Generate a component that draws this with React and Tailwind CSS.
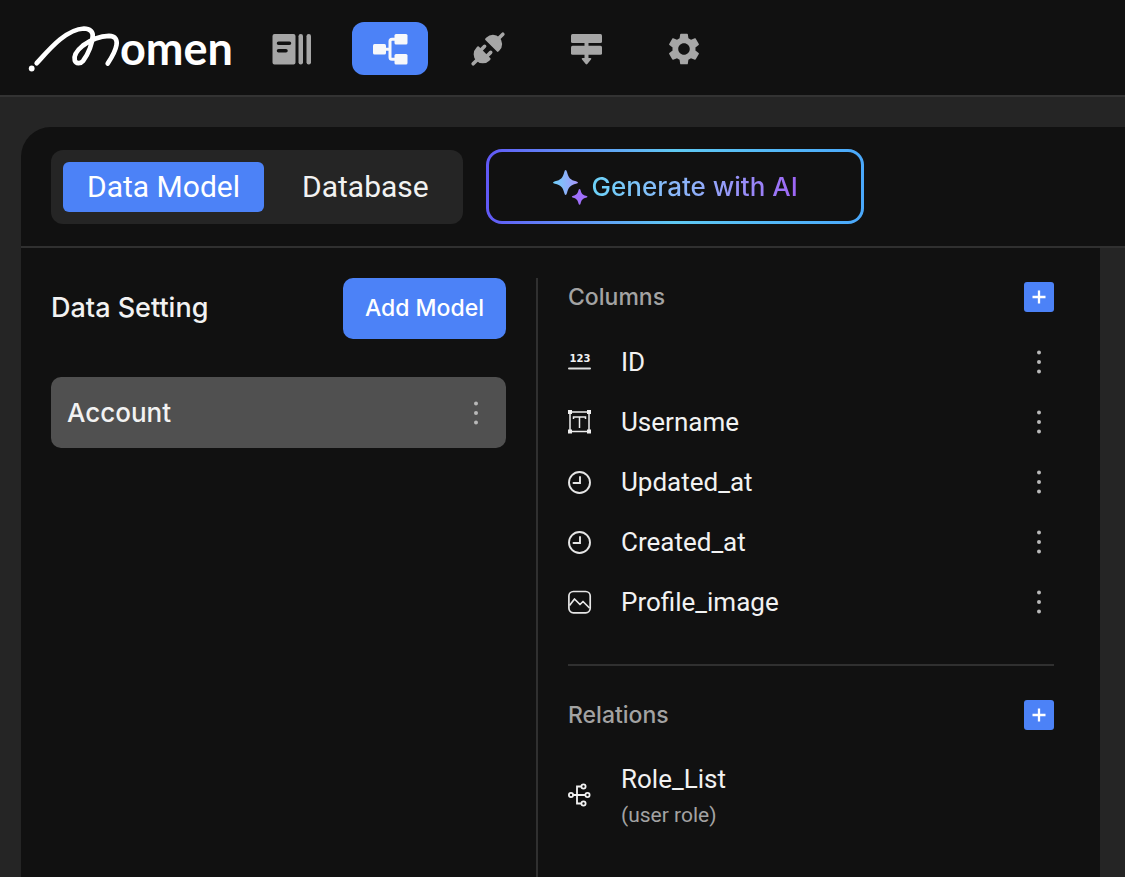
import React from "react";

function Logo() {
  return (
    <svg viewBox="0 -8 208 68" className="h-[68px] w-[208px]" role="img" aria-label="Momen">
      <circle cx="3.700" cy="45.500" r="2.900" fill="#fff" />
      <path
        d="M8.700 40.200C20 28 37 6.500 56 5.500C62 5.500 65 9 64.700 13C64.500 20 60.500 31 55 38C52.500 41 48 41 46.800 37.500C45.500 32.500 50 26.500 55 22.500C63 16.500 73 13 81 12.800C87.500 12.800 89.300 17 88.500 22C87.500 28 84 34 79.700 40.500"
        fill="none"
        stroke="#fff"
        strokeWidth="4.700"
        strokeLinecap="round"
        strokeLinejoin="round"
      />
      <text x="92" y="42" fill="#fff" fontSize="45" fontWeight="700" fontFamily="Lato, sans-serif">
        omen
      </text>
    </svg>
  );
}

function PagesIcon() {
  return (
    <svg viewBox="0 0 40 32" className="h-8 w-10" fill="#a6a6a6">
      <path
        fillRule="evenodd"
        d="M2.500 1H21.500Q23.500 1 23.500 3V29.500Q23.500 31.500 21.500 31.500H2.500Q.500 31.500 .500 29.500V3Q.500 1 2.500 1ZM6.500 8.500A1.700 1.700 0 0 0 6.500 12H17.500A1.700 1.700 0 0 0 17.500 8.500ZM6.500 16A1.700 1.700 0 0 0 6.500 19.500H14A1.700 1.700 0 0 0 14 16Z"
      />
      <rect x="26.500" y="1" width="4.500" height="30.500" rx="2.200" />
      <rect x="34.500" y="1" width="4.500" height="30.500" rx="2.200" />
    </svg>
  );
}

function DataIcon() {
  return (
    <svg viewBox="0 0 36 32" className="h-8 w-9" fill="#f7f8fa">
      <rect x="1" y="11" width="13" height="10.500" rx="1.500" />
      <rect x="22.500" y="1" width="13" height="10.500" rx="1.500" />
      <rect x="22.500" y="21" width="13" height="10.500" rx="1.500" />
      <path d="M13 16.300H18M24 6.300H20Q18 6.300 18 8.300V24.300Q18 26.300 20 26.300H24" fill="none" stroke="#f7f8fa" strokeWidth="3" />
    </svg>
  );
}

function PlugIcon() {
  return (
    <svg viewBox="0 0 36 36" className="h-9 w-9 overflow-visible" fill="#a6a6a6">
      <g transform="rotate(45 18 18)">
        <path d="M8.800 12.500V11A9.200 9.200 0 0 1 27.200 11V12.500Q27.200 13.500 26.200 13.500H9.800Q8.800 13.500 8.800 12.500Z" />
        <path d="M8.800 23.800Q8.800 22.800 9.800 22.800H26.200Q27.200 22.800 27.200 23.800V25.300A9.200 9.200 0 0 1 8.800 25.300Z" />
        <path d="M18 6V-3M18 31V39M13.700 24V18.500M22.300 24V18.500" fill="none" stroke="#a6a6a6" strokeWidth="3.600" strokeLinecap="round" />
      </g>
    </svg>
  );
}

function FlowIcon() {
  return (
    <svg viewBox="0 0 32 32" className="h-8 w-8" fill="#a6a6a6">
      <rect x="1" y="1" width="31" height="9" rx="1.500" />
      <rect x="1" y="12.700" width="31" height="9" rx="1.500" />
      <path d="M14.500 9H18.500V15H14.500ZM14.500 21H18.500V25H20.500Q22 25 21 26.500L17.300 31Q16.500 31.900 15.700 31L12 26.500Q11 25 12.500 25H14.500Z" />
    </svg>
  );
}

function GearIcon() {
  return (
    <svg viewBox="2 2 20 20" className="h-8 w-8" fill="#a6a6a6">
      <path d="M19.140 12.940c.04-.3.06-.61.06-.94 0-.32-.02-.64-.07-.94l2.030-1.580c.18-.14.23-.41.12-.61l-1.920-3.320c-.12-.22-.37-.29-.59-.22l-2.390.96c-.5-.38-1.030-.7-1.620-.94l-.36-2.540c-.04-.24-.24-.41-.48-.41h-3.840c-.24 0-.43.17-.47.41l-.36 2.540c-.59.24-1.130.57-1.620.94l-2.390-.96c-.22-.08-.47 0-.59.22L2.740 8.870c-.12.21-.08.47.12.61l2.030 1.580c-.05.3-.09.63-.09.94s.02.64.07.94l-2.030 1.580c-.18.14-.23.41-.12.61l1.920 3.320c.12.22.37.29.59.22l2.390-.96c.5.38 1.030.7 1.620.94l.36 2.540c.05.24.24.41.48.41h3.840c.24 0 .44-.17.47-.41l.36-2.540c.59-.24 1.130-.56 1.620-.94l2.390.96c.22.08.47 0 .59-.22l1.920-3.320c.12-.22.07-.47-.12-.61l-2.010-1.580zM12 15.600c-1.980 0-3.600-1.620-3.600-3.600s1.620-3.600 3.600-3.600 3.600 1.620 3.600 3.600-1.620 3.600-3.600 3.600z" />
    </svg>
  );
}

function SparkleIcon() {
  return (
    <svg viewBox="0 0 36 36" className="h-9 w-9 shrink-0">
      <defs>
        <linearGradient id="spark" x1="0" y1="0" x2="1" y2="0">
          <stop offset="0" stopColor="#6fd0fa" />
          <stop offset="1" stopColor="#a796fb" />
        </linearGradient>
      </defs>
      <path fill="url(#spark)" d="M13.500 1Q14.500 1 15 3C16.500 9 18.500 11 24 12.300Q26 13 26 13.500Q26 14.200 24 14.700C18.500 16 16.500 18 15 24Q14.500 26 13.500 26Q12.800 26 12.300 24C10.800 18 8.800 16 3 14.700Q1 14.200 1 13.500Q1 13 3 12.300C8.800 11 10.800 9 12.300 3Q12.800 1 13.500 1Z" />
      <path fill="#a070fa" d="M27.500 20Q28.300 20 28.600 21.200C29.500 24.500 30.500 25.800 34 26.800Q35.500 27.200 35.500 27.800Q35.500 28.400 34 28.800C30.500 29.700 29.500 31 28.600 34.500Q28.300 35.800 27.500 35.800Q26.900 35.800 26.500 34.500C25.600 31 24.500 29.700 21.200 28.800Q19.800 28.400 19.800 27.800Q19.800 27.200 21.200 26.800C24.500 25.800 25.600 24.500 26.500 21.200Q26.900 20 27.500 20Z" />
    </svg>
  );
}

function NumberIcon() {
  return (
    <svg viewBox="0 0 24 24" className="h-6 w-6">
      <text x="12" y="12" textAnchor="middle" fill="#f2f2f2" fontSize="10" fontWeight="700" fontFamily="DejaVu Sans, sans-serif">
        123
      </text>
      <path d="M1 18.500H22" stroke="#e0e0e0" strokeWidth="2" strokeLinecap="round" />
    </svg>
  );
}

function TextIcon() {
  return (
    <svg viewBox="0 0 24 24" className="h-6 w-6" fill="none" stroke="#ededed">
      <path d="M2 2H21V21.500H2Z" strokeWidth="1.500" />
      <path d="M5.500 9V7H17.500V9M11.500 7V18" strokeWidth="1.500" />
      <path d="M0 0H4V4H0ZM19 0H23V4H19ZM0 19.500H4V23.500H0ZM19 19.500H23V23.500H19Z" fill="#ededed" stroke="none" />
    </svg>
  );
}

function ClockIcon() {
  return (
    <svg viewBox="0 0 24 24" className="h-6 w-6" fill="none" stroke="#e6e6e6" strokeWidth="1.900" strokeLinecap="round">
      <circle cx="11.500" cy="12.500" r="10.500" />
      <path d="M12 7V13H5.500" />
    </svg>
  );
}

function ImageIcon() {
  return (
    <svg viewBox="0 0 24 24" className="h-6 w-6" fill="none" stroke="#e6e6e6" strokeWidth="1.700" strokeLinejoin="round">
      <rect x=".900" y="1.500" width="21.300" height="21.300" rx="4.500" />
      <path d="M1.500 15.500L6.500 9L12 14.500L15 11.500L21.500 18" />
    </svg>
  );
}

function RelationIcon() {
  return (
    <svg viewBox="0 0 24 24" className="mb-1 h-6 w-6" fill="none" stroke="#f2f2f2" strokeWidth="1.800">
      <circle cx="3" cy="12" r="2.100" />
      <circle cx="19.500" cy="12" r="2.100" />
      <circle cx="15.500" cy="3.500" r="2.100" />
      <circle cx="15.500" cy="20.500" r="2.100" />
      <path d="M5.100 12H17.400M13.400 3.500H9V20.500H13.400" />
    </svg>
  );
}

function Dots() {
  return (
    <svg viewBox="0 0 6 26" className="h-[26px] w-[6px]" fill="#b8b8b8">
      <circle cx="3" cy="3.500" r="2" />
      <circle cx="3" cy="13" r="2" />
      <circle cx="3" cy="22.500" r="2" />
    </svg>
  );
}

function NavButton({ label, active, children }) {
  return (
    <button
      type="button"
      aria-label={label}
      className={
        "flex h-[53px] w-[76px] items-center justify-center rounded-xl " + (active ? "bg-[#4c82f7]" : "")
      }
    >
      {children}
    </button>
  );
}

function SectionHeading({ title }) {
  return (
    <div className="flex h-[30px] items-center justify-between">
      <h2 className="font-['Inter',sans-serif] text-[23px] font-medium text-[#a3a3a3]">{title}</h2>
      <button
        type="button"
        aria-label={"Add to " + title}
        className="flex h-[30px] w-[30px] items-center justify-center rounded-[3px] bg-[#4c82f7]"
      >
        <svg viewBox="0 0 14 14" className="h-[14px] w-[14px]" stroke="#fff" strokeWidth="2.300">
          <path d="M7 .500V13.500M.500 7H13.500" />
        </svg>
      </button>
    </div>
  );
}

const columns = [
  { name: "ID", Icon: NumberIcon },
  { name: "Username", Icon: TextIcon },
  { name: "Updated_at", Icon: ClockIcon },
  { name: "Created_at", Icon: ClockIcon },
  { name: "Profile_image", Icon: ImageIcon },
];

export default function App() {
  return (
    <div className="flex min-h-screen flex-col bg-[#252525] font-['Roboto',sans-serif] text-[#f2f2f2]">
      <header className="flex h-[97px] items-center gap-[18px] border-b-2 border-[#333] bg-[#111] pt-[2px] pl-7">
        <Logo />
        <nav className="flex gap-[22px]">
          <NavButton label="Pages"><PagesIcon /></NavButton>
          <NavButton label="Data" active><DataIcon /></NavButton>
          <NavButton label="Integrations"><PlugIcon /></NavButton>
          <NavButton label="Actionflows"><FlowIcon /></NavButton>
          <NavButton label="Settings"><GearIcon /></NavButton>
        </nav>
      </header>

      <main className="mt-[30px] ml-[21px] flex grow flex-col overflow-hidden rounded-tl-[30px]">
        <div className="flex h-[121px] items-center gap-[23px] border-b-2 border-[#303030] bg-[#111] px-[30px]">
          <div className="flex gap-4 rounded-xl bg-[#252525] p-3">
            <button type="button" className="h-[50px] rounded-md bg-[#4c82f7] px-6 text-[30px] text-white">
              Data Model
            </button>
            <button type="button" className="h-[50px] px-[22px] text-[30px]">
              Database
            </button>
          </div>
          <button
            type="button"
            className="flex h-[75px] w-[378px] rounded-[16px] bg-linear-to-r from-[#6158f6] via-[#5fc9f2] to-[#4aa8fb] p-[3px]"
          >
            <span className="flex h-full w-full items-center justify-center gap-1 rounded-[13px] bg-[#111]">
              <SparkleIcon />
              <span className="bg-linear-to-r from-[#6bd2f8] via-[#8fb0fa] to-[#9d63f5] bg-clip-text font-['Inter',sans-serif] text-[26px] font-medium text-transparent">
                Generate with AI
              </span>
            </span>
          </button>
        </div>

        <div className="mr-[25px] flex grow bg-[#111] pt-[30px]">
          <section className="w-[515px] shrink-0 px-[30px]">
            <div className="flex items-center justify-between">
              <h1 className="font-['Inter',sans-serif] text-[27px] font-medium">Data Setting</h1>
              <button
                type="button"
                className="h-[61px] rounded-[10px] bg-[#4c82f7] px-[22px] font-['Inter',sans-serif] text-[23px] font-medium text-white"
              >
                Add Model
              </button>
            </div>
            <div className="mt-[38px] flex h-[71px] items-center justify-between rounded-[10px] bg-[#505050] pr-[27px] pl-4">
              <span className="font-['Inter',sans-serif] text-[26px] font-medium">Account</span>
              <button type="button" aria-label="Account options"><Dots /></button>
            </div>
          </section>

          <section className="min-w-0 grow border-l-2 border-[#303030] pt-1 pr-[46px] pl-[30px]">
            <SectionHeading title="Columns" />
            <ul className="mt-5">
              {columns.map(({ name, Icon }) => (
                <li key={name} className="flex h-[60px] items-center">
                  <Icon />
                  <span className="ml-[29px] grow text-[26px]">{name}</span>
                  <button type="button" aria-label={name + " options"} className="mr-3"><Dots /></button>
                </li>
              ))}
            </ul>
            <hr className="mt-8 mb-[34px] border-t-2 border-[#303030]" />
            <SectionHeading title="Relations" />
            <div className="mt-[31px] flex items-center gap-[29px]">
              <RelationIcon />
              <div>
                <p className="text-[26px] leading-9">Role_List</p>
                <p className="text-[21px] leading-9 text-[#a3a3a3]">(user role)</p>
              </div>
            </div>
          </section>
        </div>
      </main>
    </div>
  );
}
